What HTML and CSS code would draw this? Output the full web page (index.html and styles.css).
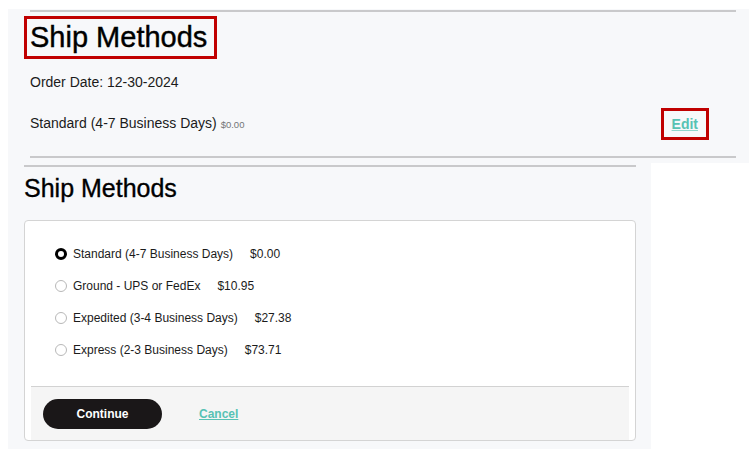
FILE: index.html
```html
<!DOCTYPE html>
<html lang="en">
<head>
<meta charset="utf-8">
<title>Ship Methods</title>
<link rel="stylesheet" href="styles.css">
</head>
<body>
<div class="page">
  <section class="summary">
    <div class="rule"></div>
    <h1 class="summary-title"><span class="marked">Ship Methods</span></h1>
    <p class="order-date">Order Date: 12-30-2024</p>
    <div class="summary-row">
      <span class="method">Standard (4-7 Business Days) <span class="method-price">$0.00</span></span>
      <a class="edit-link marked-link" href="#">Edit</a>
    </div>
    <div class="rule rule-bottom"></div>
  </section>

  <section class="editor">
    <div class="rule"></div>
    <h2 class="editor-title">Ship Methods</h2>
    <div class="card">
      <ul class="options">
        <li class="option"><input type="radio" name="ship" class="radio" checked><span class="label">Standard (4-7 Business Days)</span><span class="price">$0.00</span></li>
        <li class="option"><input type="radio" name="ship" class="radio"><span class="label">Ground - UPS or FedEx</span><span class="price">$10.95</span></li>
        <li class="option"><input type="radio" name="ship" class="radio"><span class="label">Expedited (3-4 Business Days)</span><span class="price">$27.38</span></li>
        <li class="option"><input type="radio" name="ship" class="radio"><span class="label">Express (2-3 Business Days)</span><span class="price">$73.71</span></li>
      </ul>
      <div class="card-footer">
        <button class="btn-continue" type="button">Continue</button>
        <a class="cancel-link" href="#">Cancel</a>
      </div>
    </div>
  </section>
</div>
</body>
</html>
```
FILE: styles.css
```css
* { box-sizing: border-box; }

html, body {
  margin: 0;
  padding: 0;
  background: #ffffff;
}

body {
  font-family: "Liberation Sans", Arial, sans-serif;
  color: #000000;
  width: 749px;
  height: 449px;
  overflow: hidden;
}

.page {
  padding: 9px 0 0 8px;
  display: flex;
  flex-direction: column;
  align-items: flex-start;
}

/* ---------- top summary panel ---------- */
.summary {
  width: 741px;
  background: #f7f8fa;
  padding: 1px 13px 5px 22px;
  display: flex;
  flex-direction: column;
}

.rule {
  height: 2px;
  background: #c9c9cb;
}

.summary-title {
  margin: 4px 0 0 -6px;
  font-size: 29px;
  font-weight: 400;
  line-height: 33px;
  -webkit-text-stroke: 0.4px #000000;
}

.marked {
  display: inline-block;
  border: 3px solid #c00000;
  padding: 2px 7px 2px 3px;
}

.order-date {
  margin: 15px 0 0 0;
  font-size: 14px;
  line-height: 16px;
  color: #1b1b1b;
}

.summary-row {
  margin-top: 18px;
  display: flex;
  align-items: center;
  justify-content: space-between;
  padding-right: 27px;
}

.method {
  font-size: 14px;
  line-height: 16px;
  color: #1b1b1b;
}

.method-price {
  font-size: 9.5px;
  color: #747676;
}

.edit-link {
  font-size: 14px;
  font-weight: 700;
  line-height: 16px;
  color: #57c2b4;
  text-decoration: underline;
  text-decoration-color: #8fd6cc;
}

.marked-link {
  border: 3px solid #c00000;
  padding: 5px 8px;
}

.rule-bottom {
  margin-top: 16px;
}

/* ---------- editor panel ---------- */
.editor {
  width: 643px;
  background: #f7f8fa;
  padding: 2px 15px 8px 16px;
  display: flex;
  flex-direction: column;
}

.editor-title {
  margin: 7px 0 0 0;
  font-size: 25px;
  font-weight: 400;
  line-height: 29px;
  -webkit-text-stroke: 0.35px #000000;
}

.card {
  margin-top: 17px;
  background: #ffffff;
  border: 1px solid #d4d4d4;
  border-radius: 4px;
  display: flex;
  flex-direction: column;
}

.options {
  list-style: none;
  margin: 0;
  padding: 17px 0 20px 30px;
}

.option {
  height: 32px;
  display: flex;
  align-items: center;
  font-size: 12px;
  color: #1b1b1b;
}

.radio {
  appearance: none;
  -webkit-appearance: none;
  margin: 0 6px 0 0;
  width: 12px;
  height: 12px;
  border-radius: 50%;
  border: 1px solid #b8b8b8;
  background: #ffffff;
}

.radio:checked {
  border: 3.5px solid #000000;
}

.price {
  margin-left: 17px;
}

.card-footer {
  margin: 0 6px 0 6px;
  border-top: 1px solid #d2d2d2;
  background: #f5f5f5;
  padding: 12px 12px 11px 12px;
  display: flex;
  align-items: center;
  gap: 37px;
}

.btn-continue {
  width: 119px;
  height: 30px;
  border: none;
  border-radius: 15px;
  background: #1a1718;
  color: #ffffff;
  font-family: "Liberation Sans", Arial, sans-serif;
  font-size: 12px;
  font-weight: 700;
  padding: 0;
}

.cancel-link {
  font-size: 12px;
  font-weight: 700;
  color: #57c2b4;
  text-decoration: underline;
}
```
